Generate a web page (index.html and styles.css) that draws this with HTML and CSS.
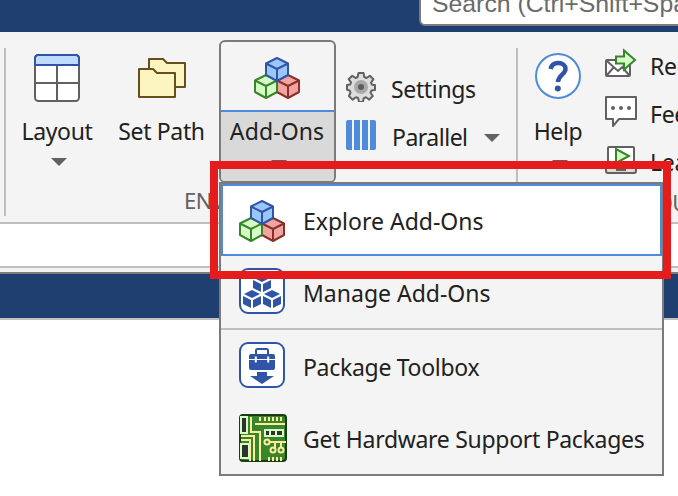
FILE: index.html
```html
<!DOCTYPE html>
<html lang="en">
<head>
<meta charset="utf-8">
<title>Add-Ons</title>
<link rel="stylesheet" href="styles.css">
</head>
<body>
<svg width="0" height="0" class="defs">
  <defs>
    <symbol id="cubes" viewBox="0 0 46 42">
      <g stroke-width="2" stroke-linejoin="round">
        <g fill="#d5ffc5" stroke="#39852c"><path d="M1 23.5 12 18l11 5.500V35l-11 6L1 35z"/><path d="M1 23.500 12 29l11-5.500M12 29v12" fill="none"/></g>
        <g fill="#f2a5a0" stroke="#8a302c"><path d="M23 23.500 34 18l11 5.500V35l-11 6-11-6z"/><path d="M23 23.500 34 29l11-5.500M34 29v12" fill="none"/></g>
        <g fill="#99c7fa" stroke="#3055a8"><path d="M12 6.500 23 1l11 5.500V18l-11 6-11-6z"/><path d="M12 6.500 23 12l11-5.500M23 12v12" fill="none"/></g>
      </g>
      <path d="M23 25v10" stroke="#39852c" stroke-width="2"/>
    </symbol>
  </defs>
</svg>
<header class="topbar"><div class="search">Search (Ctrl+Shift+Space)</div></header>
<main>
  <nav class="ribbon">
    <section class="group environment">
      <div class="tools">
        <div class="tool layout">
          <svg width="46" height="48" viewBox="0 0 46 48"><rect x="1" y="1" width="44" height="46" rx="3.500" fill="#fff" stroke="#616161" stroke-width="2"/><path d="M23 12v35M1 29h44" stroke="#616161" stroke-width="2"/><path d="M1 11V4.500Q1 1 4.500 1h37Q45 1 45 4.500V11z" fill="#bfdcff" stroke="#3055a8" stroke-width="2"/></svg>
          <span>Layout</span><i class="arrow"></i>
        </div>
        <div class="tool path">
          <svg width="48" height="48" viewBox="0 0 48 48"><g fill="#fcf5c2" stroke="#65501c" stroke-width="2" stroke-linejoin="round"><path d="M11 33V5h14l4 4h18v24z"/><path d="M1 43V15h14l4 4h18v24z"/></g></svg>
          <span>Set Path</span>
        </div>
        <div class="addons">
          <div class="addons-icon"><svg width="46" height="42"><use href="#cubes"/></svg></div>
          <div class="addons-label"><span>Add-Ons</span><i class="arrow"></i></div>
        </div>
        <div class="rows">
          <div class="row">
            <svg width="30" height="30" viewBox="0 0 30 30"><path d="M12.500 1h5l.8 4 2.200 1 3.300-2.300 3.600 3.600L25 10.500l1 2.200 3 .3v5l-3.500.5-1 2.200 2.300 3.300-3.600 3.600-3.300-2.300-2.200.8-.7 3.900h-4l-.9-4-2.200-.8-3.400 2.400-3.600-3.600L4.500 20.700l-.9-2.200L1 17.800V13l3.200-.5.8-2.100-2.400-3.200 3.600-3.500L9.500 6l2.100-1z" fill="#ddd" stroke="#616161" stroke-width="2" stroke-linejoin="round"/><circle cx="15" cy="15" r="7" fill="#a9a9a9"/><circle cx="15" cy="15" r="3" fill="#5c5c5c"/></svg>
            <span>Settings</span>
          </div>
          <div class="row parallel">
            <svg width="30" height="30" viewBox="0 0 30 30" fill="#4f8bda"><path d="M2 0h4v30H2q-2 0-2-2V2q0-2 2-2zM8 0h6v30H8zM16 0h6v30h-6zM24 0h4q2 0 2 2v26q0 2-2 2h-4z"/></svg>
            <span>Parallel</span><i class="arrow"></i>
          </div>
        </div>
      </div>
      <div class="caption">ENVIRONMENT</div>
    </section>
    <section class="group resources">
      <div class="tools">
        <div class="tool help">
          <svg width="46" height="48" viewBox="0 0 46 48"><circle cx="23" cy="23" r="22" fill="#fff" stroke="#4f8bda" stroke-width="2"/><path d="M15.500 16C16.500 11.500 19.500 10 23.200 10c4.500 0 7.300 2.500 7.300 6 0 5.500-7.500 6-7.500 13" fill="none" stroke="#3055a8" stroke-width="4.500"/><circle cx="22.800" cy="35.500" r="3" fill="#3055a8"/></svg>
          <span>Help</span><i class="arrow"></i>
        </div>
        <div class="links">
          <div class="link">
            <svg width="32" height="32" viewBox="0 -1 32 32"><g fill="#fff" stroke="#616161" stroke-width="2"><rect x="1" y="11" width="24" height="16" rx="1"/><path d="m2 12 11 10 11-10M2 26l7-8M24 26l-7-8" fill="none"/></g><path d="M11 8h8V2l11 9.500L19 21v-6h-8z" fill="#d5ffc5" stroke="#39852c" stroke-width="2" transform="translate(0 -.5)"/></svg>
            <span>Request Support</span>
          </div>
          <div class="link">
            <svg width="32" height="32" viewBox="0 0 32 32"><path d="M1 1h30v22H14l-6 7v-7H1z" fill="#fff" stroke="#616161" stroke-width="2" stroke-linejoin="round"/><g fill="#616161"><circle cx="8" cy="12" r="2"/><circle cx="16" cy="12" r="2"/><circle cx="24" cy="12" r="2"/></g></svg>
            <span>Feedback</span>
          </div>
          <div class="link">
            <svg width="32" height="32" viewBox="0 0 32 32"><rect x="3" y="3" width="26" height="23" rx="1" fill="#fff" stroke="#616161" stroke-width="2"/><path d="M1 24h11v2h8v-2h11v3q0 2-2 2H3q-2 0-2-2z" fill="#ddd" stroke="#616161" stroke-width="2"/><path d="M11 5v14l13-7z" fill="#d5ffc5" stroke="#39852c" stroke-width="2"/></svg>
            <span>Learn MATLAB</span>
          </div>
        </div>
      </div>
      <div class="caption">RESOURCES</div>
    </section>
  </nav>
  <div class="pathbar"></div>
  <div class="strip"></div>
  <div class="titlebar"></div>
</main>
<div class="menu">
  <div class="item selected"><svg width="48" height="48" viewBox="-1 -3 48 48"><use href="#cubes" width="46" height="42"/></svg><span>Explore Add-Ons</span></div>
  <div class="item framed">
    <svg width="48" height="48" viewBox="0 0 48 48"><rect x="2" y="2" width="44" height="44" rx="8" fill="#fff" stroke="#3055a8" stroke-width="2"/><g id="solid"><path d="m24 7 8 4-8 4-8-4zM15 13l8 4v8l-8-4zM33 13l-8 4v8l8-4z" fill="#3055a8"/></g><use href="#solid" x="-10" y="16"/><use href="#solid" x="10" y="16"/></svg>
    <span>Manage Add-Ons</span>
  </div>
  <div class="rule"></div>
  <div class="item framed tight">
    <svg width="48" height="48" viewBox="0 0 48 48"><rect x="2" y="2" width="44" height="44" rx="8" fill="#fff" stroke="#3055a8" stroke-width="2"/><path d="M18 13V9.500Q18 8 19.500 8h9Q30 8 30 9.500V13" fill="none" stroke="#3055a8" stroke-width="2"/><path d="M13 13h22q2 0 2 2v3H11v-3q0-2 2-2zM11 19h26v8q0 2-2 2H13q-2 0-2-2zM19 31h10v4h7l-12 8-12-8h7z" fill="#3055a8"/><path d="M17.800 15.500v6M30.200 15.500v6" stroke="#fff" stroke-width="2"/></svg>
    <span>Package Toolbox</span>
  </div>
  <div class="item board tight">
    <svg width="48" height="48" viewBox="0 0 48 48"><rect x="1" y="1" width="46" height="46" rx="3" fill="#39852c" stroke="#173e13" stroke-width="2"/><g fill="#303030" stroke="#d5ffc5" stroke-width="2"><path d="M2 3h6v16H2zM2 30h8v14H2zM26 16h18v6H26z"/></g><path d="M31 16v6M37 16v6" stroke="#d5ffc5" stroke-width="2"/><g fill="none" stroke="#fcec9c" stroke-width="2"><path d="M12 3v15h9v29M2 22h13v25M2 26h9v21"/><path d="M16 10h30M21 3v4M26 3v4M30 3v4M34 3v4M38 3v4M42 3v4M30 43v4M34 43v4M38 43v4M42 43v4M31 28h16M36 28v6M42 28v6"/><circle cx="28" cy="28" r="2.500"/><circle cx="34" cy="36" r="2.500"/><circle cx="42" cy="36" r="2.500"/></g></svg>
    <span>Get Hardware Support Packages</span>
  </div>
</div>
<div class="highlight"></div>
</body>
</html>
```
FILE: styles.css
```css
* { box-sizing: border-box; }
body { margin: 0; width: 678px; height: 496px; overflow: hidden; position: relative; background: #fff; color: #212121; font: 23px/32px "Noto Sans", sans-serif; white-space: nowrap; }
svg { display: block; flex: none; }
.defs { position: absolute; }
.topbar { height: 32px; background: #1e3f6f; padding-left: 419px; overflow: hidden; }
.search { width: 400px; height: 46px; margin-top: -20px; padding: 7px 0 0 11px; border: 2px solid #7b7b7b; border-radius: 6px; background: #fff; color: #6a6a6a; font: 24.8px/30px "Liberation Sans", sans-serif; }
.ribbon { display: flex; height: 192px; padding-left: 4px; background: #f4f4f4; border-bottom: 2px solid #bfbfbf; overflow: hidden; }
.group { display: flex; flex-direction: column; flex: none; height: 168px; margin-top: 16px; border-left: 2px solid #bfbfbf; }
.environment { width: 512px; }
.resources { width: 324px; }
.tools { display: flex; height: 139px; }
.caption { text-align: center; color: #616161; font-size: 22px; line-height: 34px; letter-spacing: -.5px; padding-right: 1px; }
.tool { display: flex; flex-direction: column; align-items: center; padding-top: 6px; flex: none; }
.tool span { margin-top: 13px; letter-spacing: -.35px; }
.layout { width: 102px; }
.path { width: 108px; padding-right: 1px; }
.arrow { width: 16px; height: 8px; background: #616161; clip-path: polygon(0 0, 100% 0, 50% 100%); flex: none; }
.tool .arrow { margin-top: 11px; margin-left: 4px; }
.tool.help .arrow { margin-top: 13px; }
.addons { width: 117px; height: 143px; flex: none; margin: -8px 0 0 3px; border: 2px solid #7b7b7b; border-radius: 6px; overflow: hidden; }
.addons-icon { height: 70px; border-bottom: 2px solid #4f8bda; display: flex; justify-content: center; padding: 15px 2px 0 0; }
.addons-label { height: 71px; background: #d9d9d9; display: flex; flex-direction: column; align-items: center; padding: 3px 1px 0 0; letter-spacing: .1px; }
.addons-label .arrow { margin: 13px 0 0 4px; }
.rows { display: flex; flex-direction: column; padding: 16px 0 0 10px; }
.row { display: flex; align-items: center; height: 48px; }
.row svg { margin-top: -2px; }
.row span { margin: 2px 0 0 15px; letter-spacing: -.35px; }
.row .arrow { margin-left: auto; margin-top: 4px; }
.parallel { width: 154px; }
.parallel span { margin-left: 16px; letter-spacing: -.5px; }
.help { width: 80px; padding-top: 5px; }
.tool.help span { margin-top: 14px; }
.links { margin: -7px 0 0 7px; }
.link { display: flex; align-items: center; height: 48px; }
.link span { margin: 1px 0 0 13px; letter-spacing: -.3px; }
.link svg { margin-top: -2px; }
.pathbar { height: 44px; border-bottom: 2px solid #bfbfbf; }
.strip { height: 6px; background: #f0f2f2; border-bottom: 2px solid #7b7b7b; }
.titlebar { height: 46px; background: #1e3f6f; border-bottom: 2px solid #bfbfbf; }
.menu { position: absolute; left: 219px; top: 182px; width: 445px; height: 294px; background: #f4f4f4; border: 2px solid #7b7b7b; }
.item { display: flex; align-items: center; height: 72px; padding-left: 17px; }
.item span { margin: 2px 0 0 17px; }
.selected { background: #fff; border: 2px solid #4f8bda; padding-left: 15px; }
.selected svg { margin-top: 2px; }
.framed svg { margin-top: -2px; }
.tight span { letter-spacing: -.3px; }
.board { padding-left: 18px; }
.board span { margin-left: 16px; }
.rule { height: 2px; background: #bfbfbf; }
.highlight { position: absolute; left: 210px; top: 161px; width: 461px; height: 118px; border: 8px solid #e61b1b; }
```
